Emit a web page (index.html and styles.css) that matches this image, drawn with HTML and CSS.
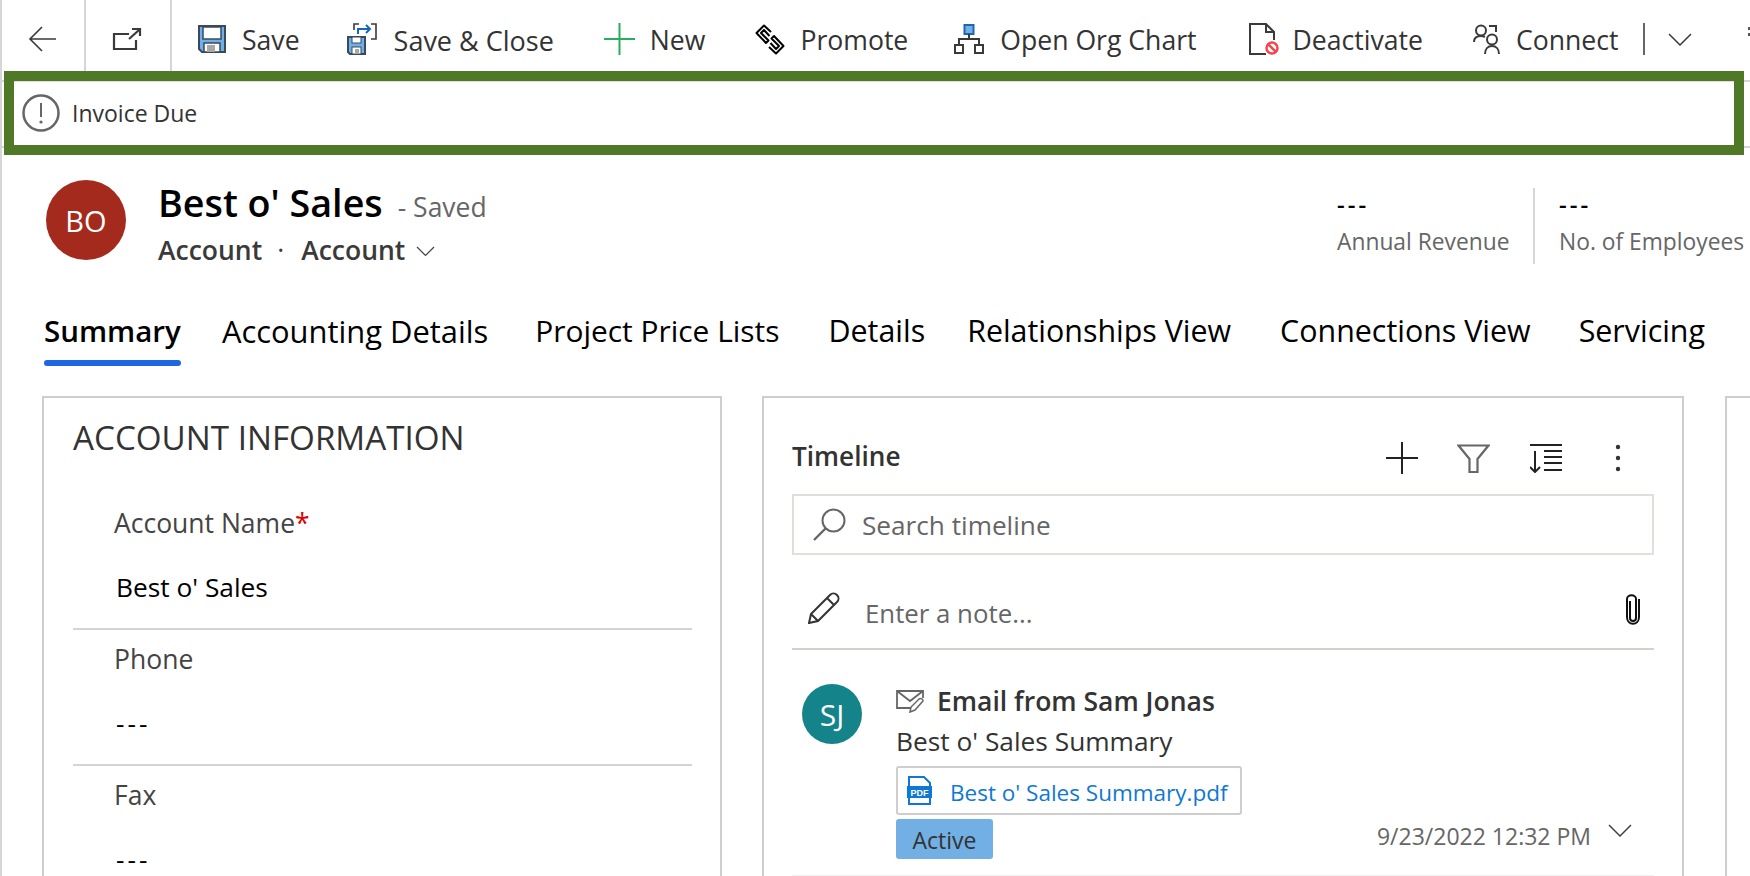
FILE: index.html
```html
<!DOCTYPE html>
<html lang="en">
<head>
<meta charset="utf-8">
<title>Best o' Sales - Saved</title>
<link rel="stylesheet" href="styles.css">
</head>
<body>
<div class="page">
  <header class="cmdbar">
    <button class="nav-btn nav-back" aria-label="Back">
      <svg width="28" height="26" viewBox="0 0 28 26"><path d="M28 13H2M14 1 2 13l12 12" fill="none" stroke="#3a3a3a" stroke-width="1.600"/></svg>
    </button>
    <button class="nav-btn nav-open" aria-label="Open">
      <svg width="30" height="24" viewBox="0 0 30 24"><path d="M17 7H2v15h22V13M17 12l10-9M20 2h8v7" fill="none" stroke="#3a3a3a" stroke-width="2.200"/></svg>
    </button>
    <div class="cmd cmd-save">
      <svg width="28" height="28" viewBox="0 0 28 28"><path d="M1 1h26v26H4l-3-3z" fill="#6fb0e8" stroke="#3a4a5a" stroke-width="2"/><rect x="5" y="2" width="18" height="12" fill="#fff" stroke="#3a4a5a" stroke-width="1.500"/><rect x="6" y="18" width="16" height="9" fill="#fff" stroke="#3a4a5a" stroke-width="1.500"/><rect x="9" y="20" width="8" height="7" fill="#a8a8a8"/></svg>
      <span>Save</span>
    </div>
    <div class="cmd cmd-saveclose">
      <svg width="30" height="32" viewBox="0 0 30 32"><path d="M1 14h17v17H3l-2-2z" fill="#6fb0e8" stroke="#3a4a5a" stroke-width="2"/><rect x="5" y="14" width="9" height="6" fill="#fff" stroke="#3a4a5a"/><rect x="5" y="24" width="9" height="7" fill="#fff" stroke="#3a4a5a"/><rect x="8" y="26" width="4" height="5" fill="#a8a8a8"/><path d="M7 7V1h5M24 1h5v15h-5" fill="none" stroke="#3a3a3a" stroke-width="1.600"/><path d="M11 11V6h12M19 2l4 4-4 4" fill="none" stroke="#1766b8" stroke-width="2"/></svg>
      <span>Save &amp; Close</span>
    </div>
    <div class="cmd cmd-new">
      <svg width="31" height="32" viewBox="0 0 31 32"><path d="M15.500 0v32M0 16h31" stroke="#27ae5f" stroke-width="2"/></svg>
      <span>New</span>
    </div>
    <div class="cmd cmd-promote">
      <svg width="30" height="31" viewBox="0 0 30 31"><g fill="none" stroke="#000" stroke-width="2" stroke-linejoin="round"><path d="M16 8 9 1.500 1.500 9 11 19l2.500-2.500L6 9l3-3 5.500 6"/><path d="M14 23l7 6.500 7.500-7.500L19 12l-2.500 2.500L24 22l-3 3-5.500-6"/></g></svg>
      <span>Promote</span>
    </div>
    <div class="cmd cmd-org">
      <svg width="30" height="30" viewBox="0 0 30 30"><rect x="10.500" y="1" width="9" height="9" fill="#74b1e6" stroke="#1f66b0" stroke-width="2"/><path d="M15 10v5M5 21v-6h20v6" fill="none" stroke="#3a3a3a" stroke-width="2"/><rect x="1" y="21" width="8" height="8" fill="#fff" stroke="#3a3a3a" stroke-width="2"/><rect x="21" y="21" width="8" height="8" fill="#fff" stroke="#3a3a3a" stroke-width="2"/></svg>
      <span>Open Org Chart</span>
    </div>
    <div class="cmd cmd-deact">
      <svg width="30" height="32" viewBox="0 0 30 32"><path d="M17 31H1V1h16l8 8v8M17 1v8h8" fill="none" stroke="#3a3a3a" stroke-width="2"/><circle cx="23" cy="25" r="5.500" fill="#fff" stroke="#f0484e" stroke-width="2.500"/><path d="m19 21 8 8" stroke="#f0484e" stroke-width="2.500"/></svg>
      <span>Deactivate</span>
    </div>
    <div class="cmd cmd-conn">
      <svg width="27" height="30" viewBox="0 0 27 30"><circle cx="8" cy="6.500" r="5" fill="none" stroke="#3a3a3a" stroke-width="2"/><path d="M1 18c0-4 3-6 7-6 2 0 3 .5 4 1" fill="none" stroke="#3a3a3a" stroke-width="2"/><path d="M16 2h7v6" fill="none" stroke="#3a3a3a" stroke-width="2"/><circle cx="19" cy="15.500" r="5" fill="none" stroke="#3a3a3a" stroke-width="2"/><path d="M12 30c0-5 3-8 7-8s7 3 7 8" fill="none" stroke="#3a3a3a" stroke-width="2"/></svg>
      <span>Connect</span>
    </div>
    <i class="cmd-sep"></i>
    <svg class="cmd-chev" width="24" height="13" viewBox="0 0 24 13"><path d="m1 1 11 11L23 1" fill="none" stroke="#3a3a3a" stroke-width="1.500"/></svg>
    <i class="cmd-more"></i>
  </header>

  <div class="alert-row">
    <div class="alert">
      <svg width="38" height="38" viewBox="0 0 38 38"><circle cx="19" cy="19" r="17.500" fill="none" stroke="#666" stroke-width="2.500"/><path d="M19 9v14" stroke="#666" stroke-width="2"/><circle cx="19" cy="28" r="1.600" fill="#666"/></svg>
      <span>Invoice Due</span>
    </div>
  </div>

  <section class="head">
    <div class="avatar avatar-bo">BO</div>
    <div class="head-main">
      <div class="head-title"><h1>Best o' Sales</h1><span class="saved">- Saved</span></div>
      <div class="head-sub"><span>Account</span><span class="dot">·</span><span>Account</span>
        <svg width="19" height="11" viewBox="0 0 19 11"><path d="m1 1 8.500 8.500L18 1" fill="none" stroke="#444" stroke-width="1.200"/></svg>
      </div>
    </div>
    <div class="stats">
      <div class="stat stat-rev"><b class="dash">---</b><span>Annual Revenue</span></div>
      <div class="stat stat-emp"><b class="dash">---</b><span>No. of Employees</span></div>
    </div>
  </section>

  <nav class="tabs">
    <a class="tab tab-active">Summary</a>
    <a class="tab t-acc">Accounting Details</a>
    <a class="tab t-price">Project Price Lists</a>
    <a class="tab t-det">Details</a>
    <a class="tab t-rel">Relationships View</a>
    <a class="tab t-con">Connections View</a>
    <a class="tab t-ser">Servicing</a>
  </nav>

  <main class="cols">
    <section class="card card-info">
      <h2>ACCOUNT INFORMATION</h2>
      <div class="field field-first">
        <label>Account Name<em>*</em></label>
        <div class="val">Best o' Sales</div>
      </div>
      <div class="field">
        <label>Phone</label>
        <div class="val dash">---</div>
      </div>
      <div class="field field-last">
        <label>Fax</label>
        <div class="val dash">---</div>
      </div>
    </section>

    <section class="card card-time">
      <div class="time-head">
        <h3>Timeline</h3>
        <div class="time-tools">
          <svg width="32" height="32" viewBox="0 0 32 32"><path d="M16 0v32M0 16h32" stroke="#222" stroke-width="2"/></svg>
          <svg class="tool-filter" width="33" height="29" viewBox="0 0 33 29"><path d="M1.500 1.500h30L20.500 15v13h-8V15z" fill="none" stroke="#666" stroke-width="2.200"/></svg>
          <svg class="tool-sort" width="32" height="29" viewBox="0 0 32 29"><path d="M0 1h32M5 7v21M0 23l5 5 5-5M14 7h18M14 13h18M14 19h18M14 26h18" fill="none" stroke="#222" stroke-width="2"/></svg>
          <svg class="tool-more" width="6" height="28" viewBox="0 0 6 28"><circle cx="3" cy="3" r="2.200" fill="#333"/><circle cx="3" cy="14" r="2.200" fill="#333"/><circle cx="3" cy="25" r="2.200" fill="#333"/></svg>
        </div>
      </div>
      <div class="search">
        <svg width="33" height="33" viewBox="0 0 33 33"><circle cx="20.500" cy="12.500" r="11" fill="none" stroke="#666" stroke-width="2"/><path d="M12.500 20.500 1 32" stroke="#666" stroke-width="2.400"/></svg>
        <span>Search timeline</span>
      </div>
      <div class="note">
        <svg width="32" height="32" viewBox="0 0 32 32"><path d="M1 31l2-9L22 3c2-2 5-2 7 0s2 5 0 7L10 29zM3 22l7 7M19 6l7 7" fill="none" stroke="#333" stroke-width="2"/></svg>
        <span>Enter a note...</span>
        <svg class="clip" width="16" height="33" viewBox="0 0 16 33"><path d="M5 8v17c0 4 6 4 6 0V6C11 1 2 1 2 6v18c0 9 12 9 12 0V6" fill="none" stroke="#111" stroke-width="2"/></svg>
      </div>
      <article class="entry">
        <div class="avatar avatar-sj">SJ</div>
        <div class="entry-body">
          <div class="entry-title">
            <svg width="29" height="24" viewBox="0 0 29 24"><path d="M16 19H1V2h26v7M1 2l13 10L27 2" fill="none" stroke="#666" stroke-width="1.800"/><path d="m14 23 1-5 8-8c2-1 4 0 4 2l-8 9z" fill="#fff" stroke="#666" stroke-width="1.500"/></svg>
            <b>Email from Sam Jonas</b>
          </div>
          <div class="entry-sub">Best o' Sales Summary</div>
          <a class="file">
            <svg width="27" height="30" viewBox="0 0 27 30"><path d="M3 10V1h15l6 6v3M3 22v6h21v-6" fill="none" stroke="#0f78d4" stroke-width="2"/><rect x="1" y="10" width="25" height="12" fill="#0f78d4"/><text x="13.500" y="19.500" class="pdf-text">PDF</text></svg>
            <span>Best o' Sales Summary.pdf</span>
          </a>
          <div class="entry-foot">
            <span class="badge">Active</span>
            <span class="date">9/23/2022 12:32 PM</span>
            <svg width="24" height="13" viewBox="0 0 24 13"><path d="m1 1 11 11L23 1" fill="none" stroke="#444" stroke-width="1.500"/></svg>
          </div>
        </div>
      </article>
    </section>

    <section class="card card-third"></section>
  </main>
</div>
</body>
</html>
```

FILE: styles.css
```css
* { box-sizing: border-box; }
html, body { margin: 0; height: 100%; }
body {
  background: #fff;
  font-family: "Open Sans", "Noto Sans", sans-serif;
  color: #333;
  overflow: hidden;
}
.page {
  height: 876px;
  overflow: hidden;
  border-left: 2px solid #d6d6d6;
}
svg { display: block; flex: none; }

.cmdbar {
  height: 71px;
  display: flex;
  font-size: 26.600px;
  color: #333;
  white-space: nowrap;
}
.nav-btn {
  height: 71px;
  background: none;
  border: 0;
  border-right: 2px solid #d6d6d6;
  display: flex;
  align-items: center;
  justify-content: center;
  padding: 7px 0 0;
  margin: 0;
}
.nav-back { width: 84px; padding-right: 3px; }
.nav-open { width: 86px; padding-right: 3px; }
.cmd { display: flex; align-items: center; padding-top: 7px; }
.cmd span { position: relative; top: 1px; }
.cmd-save { margin-left: 26px; gap: 16px; }
.cmd-saveclose { margin-left: 47px; gap: 17px; font-size: 27px; }
.cmd-new { margin-left: 50px; gap: 15px; }
.cmd-promote { margin-left: 50px; gap: 15px; }
.cmd-org { margin-left: 46px; gap: 16px; }
.cmd-deact { margin-left: 52px; gap: 14px; }
.cmd-conn { margin-left: 50px; gap: 16px; }
.cmd-sep {
  width: 2px;
  height: 32px;
  background: #666;
  margin: 7px 0 0 25px;
  align-self: center;
}
.cmd-chev { margin: 7px 0 0 23px; align-self: center; }
.cmd-more {
  width: 2px;
  height: 3px;
  background: #555;
  box-shadow: 0 6px 0 #555;
  margin: 27px 0 0 auto;
  align-self: flex-start;
}

.alert-row {
  height: 84px;
  padding-left: 2px;
  background:
    linear-gradient(#d6d6d6, #d6d6d6) 0 9px / 100% 2px no-repeat,
    linear-gradient(#d6d6d6, #d6d6d6) 0 75px / 100% 2px no-repeat;
}
.alert {
  height: 84px;
  width: 1740px;
  border: 10px solid #4f7927;
  display: flex;
  align-items: center;
  padding-left: 8px;
  gap: 12px;
  font-size: 23px;
  background: #fff;
  box-shadow: inset 0 1px 0 #dedede;
}

.head {
  height: 115px;
  display: flex;
  padding-left: 44px;
}
.avatar {
  border-radius: 50%;
  color: #fff;
  display: flex;
  align-items: center;
  justify-content: center;
  flex: none;
}
.avatar-bo {
  width: 80px;
  height: 80px;
  margin-top: 25px;
  background: #a52a1e;
  font-size: 29px;
}
.head-main { margin-left: 32px; padding-top: 24px; }
.head-title { display: flex; align-items: baseline; gap: 15px; }
.head-title h1 {
  margin: 0;
  font-size: 37.700px;
  line-height: 48px;
  font-weight: 600;
  color: #000;
}
.saved { font-size: 26.500px; color: #666; }
.head-sub {
  display: flex;
  align-items: center;
  margin-top: 4px;
  font-size: 26.500px;
  line-height: 38px;
  font-weight: 600;
  color: #3a3a3a;
}
.head-sub .dot { margin: 0 17px 0 15px; font-weight: 400; }
.head-sub svg { margin: 2px 0 0 11px; }
.stats {
  margin-left: auto;
  display: flex;
  padding-top: 33px;
}
.stat { display: flex; flex-direction: column; height: 76px; }
.dash { letter-spacing: 3px; }
.stat b {
  font-weight: 600;
  font-size: 24px;
  line-height: 28px;
  color: #000;
  padding-top: 2px;
  box-sizing: content-box;
}
.stat span {
  font-size: 22.800px;
  line-height: 38px;
  color: #666;
  white-space: nowrap;
  margin-top: 5px;
}
.stat-rev { width: 198px; border-right: 2px solid #d6d6d6; }
.stat-emp { width: 215px; padding-left: 24px; }

.tabs {
  height: 126px;
  display: flex;
  padding-left: 42px;
  font-size: 30.400px;
  color: #000;
  white-space: nowrap;
}
.tab { height: 96px; display: block; padding-top: 41px; line-height: 40px; }
.tab-active {
  font-size: 29.500px;
  font-weight: 600;
  position: relative;
}
.tab-active::after {
  content: "";
  position: absolute;
  left: 0;
  right: 0;
  bottom: 0;
  height: 6px;
  border-radius: 3px;
  background: #1f66e0;
}
.t-acc { margin-left: 41px; font-size: 30.900px; }
.t-price { margin-left: 47px; font-size: 29.900px; }
.t-det { margin-left: 49px; }
.t-rel { margin-left: 42px; }
.t-con { margin-left: 49px; }
.t-ser { margin-left: 48px; }

.cols {
  display: flex;
  padding-left: 40px;
  gap: 40px;
  height: 480px;
}
.card {
  border: 2px solid #cfcdcd;
  border-bottom: 0;
  flex: none;
  height: 600px;
}
.card-info { width: 680px; padding: 17px 28px 0 29px; }
.card-time { width: 922px; padding: 0 28px; margin-left: 0; }
.card-third { width: 40px; margin-left: 1px; }
.card-info h2 {
  margin: 0;
  font-size: 33.200px;
  line-height: 46px;
  font-weight: 400;
  color: #333;
}
.field { border-bottom: 2px solid #d4d4d4; height: 136px; padding: 11px 0 0 41px; }
.field-first { height: 169px; padding-top: 44px; }
.field-last { border-bottom: 0; }
.field label { display: block; font-size: 26.500px; line-height: 36px; color: #444; }
.field em { color: #e00000; font-style: normal; }
.val { font-size: 26.300px; line-height: 36px; color: #000; margin-top: 28px; padding-left: 2px; }

.time-head {
  height: 96px;
  display: flex;
  align-items: center;
  justify-content: space-between;
  padding-top: 20px;
}
.time-head h3 { margin: 0; font-size: 26.200px; font-weight: 600; color: #333; }
.time-tools { display: flex; align-items: center; margin: 4px 33px 0 0; }
.tool-filter { margin-left: 39px; }
.tool-sort { margin-left: 40px; }
.tool-more { margin-left: 53px; }
.search {
  height: 61px;
  border: 2px solid #e2dfdb;
  display: flex;
  align-items: center;
  padding-left: 19px;
  gap: 16px;
  font-size: 26.200px;
  color: #666;
}
.note {
  height: 95px;
  border-bottom: 2px solid #d4d0cc;
  display: flex;
  align-items: center;
  padding: 12px 0 0 16px;
  font-size: 25.800px;
  color: #666;
  gap: 25px;
}
.note span { position: relative; top: 5px; }
.note .clip { margin: 4px 13px 0 auto; }
.entry {
  display: flex;
  height: 227px;
  padding: 34px 0 0 10px;
  border-bottom: 2px solid #f0f0f0;
}
.avatar-sj {
  width: 60px;
  height: 60px;
  background: #14848a;
  font-size: 30px;
}
.entry-body { margin-left: 34px; flex: 1; }
.entry-title {
  display: flex;
  align-items: center;
  gap: 12px;
  height: 34px;
  font-size: 26.500px;
}
.entry-title b { font-weight: 600; color: #333; }
.entry-sub { font-size: 26.300px; line-height: 40px; margin-top: 3px; color: #333; }
.file {
  width: 346px;
  height: 49px;
  margin-top: 5px;
  border: 2px solid #cfcdcd;
  border-radius: 3px;
  display: flex;
  align-items: center;
  padding-left: 8px;
  gap: 17px;
  font-size: 22.500px;
  color: #0f78d4;
}
.file span { position: relative; top: 2px; }
.pdf-text {
  font-family: "Liberation Sans", sans-serif;
  font-size: 9px;
  font-weight: 700;
  fill: #fff;
  text-anchor: middle;
}
.entry-foot { display: flex; align-items: center; margin-top: 4px; height: 40px; }
.badge {
  width: 97px;
  height: 40px;
  background: #71afe5;
  border-radius: 3px;
  display: flex;
  align-items: center;
  justify-content: center;
  font-size: 23px;
  color: #333;
  padding-top: 2px;
}
.date { margin: 0 0 6px auto; font-size: 23px; color: #666; }
.entry-foot svg { margin: 0 22px 18px 17px; }
```
